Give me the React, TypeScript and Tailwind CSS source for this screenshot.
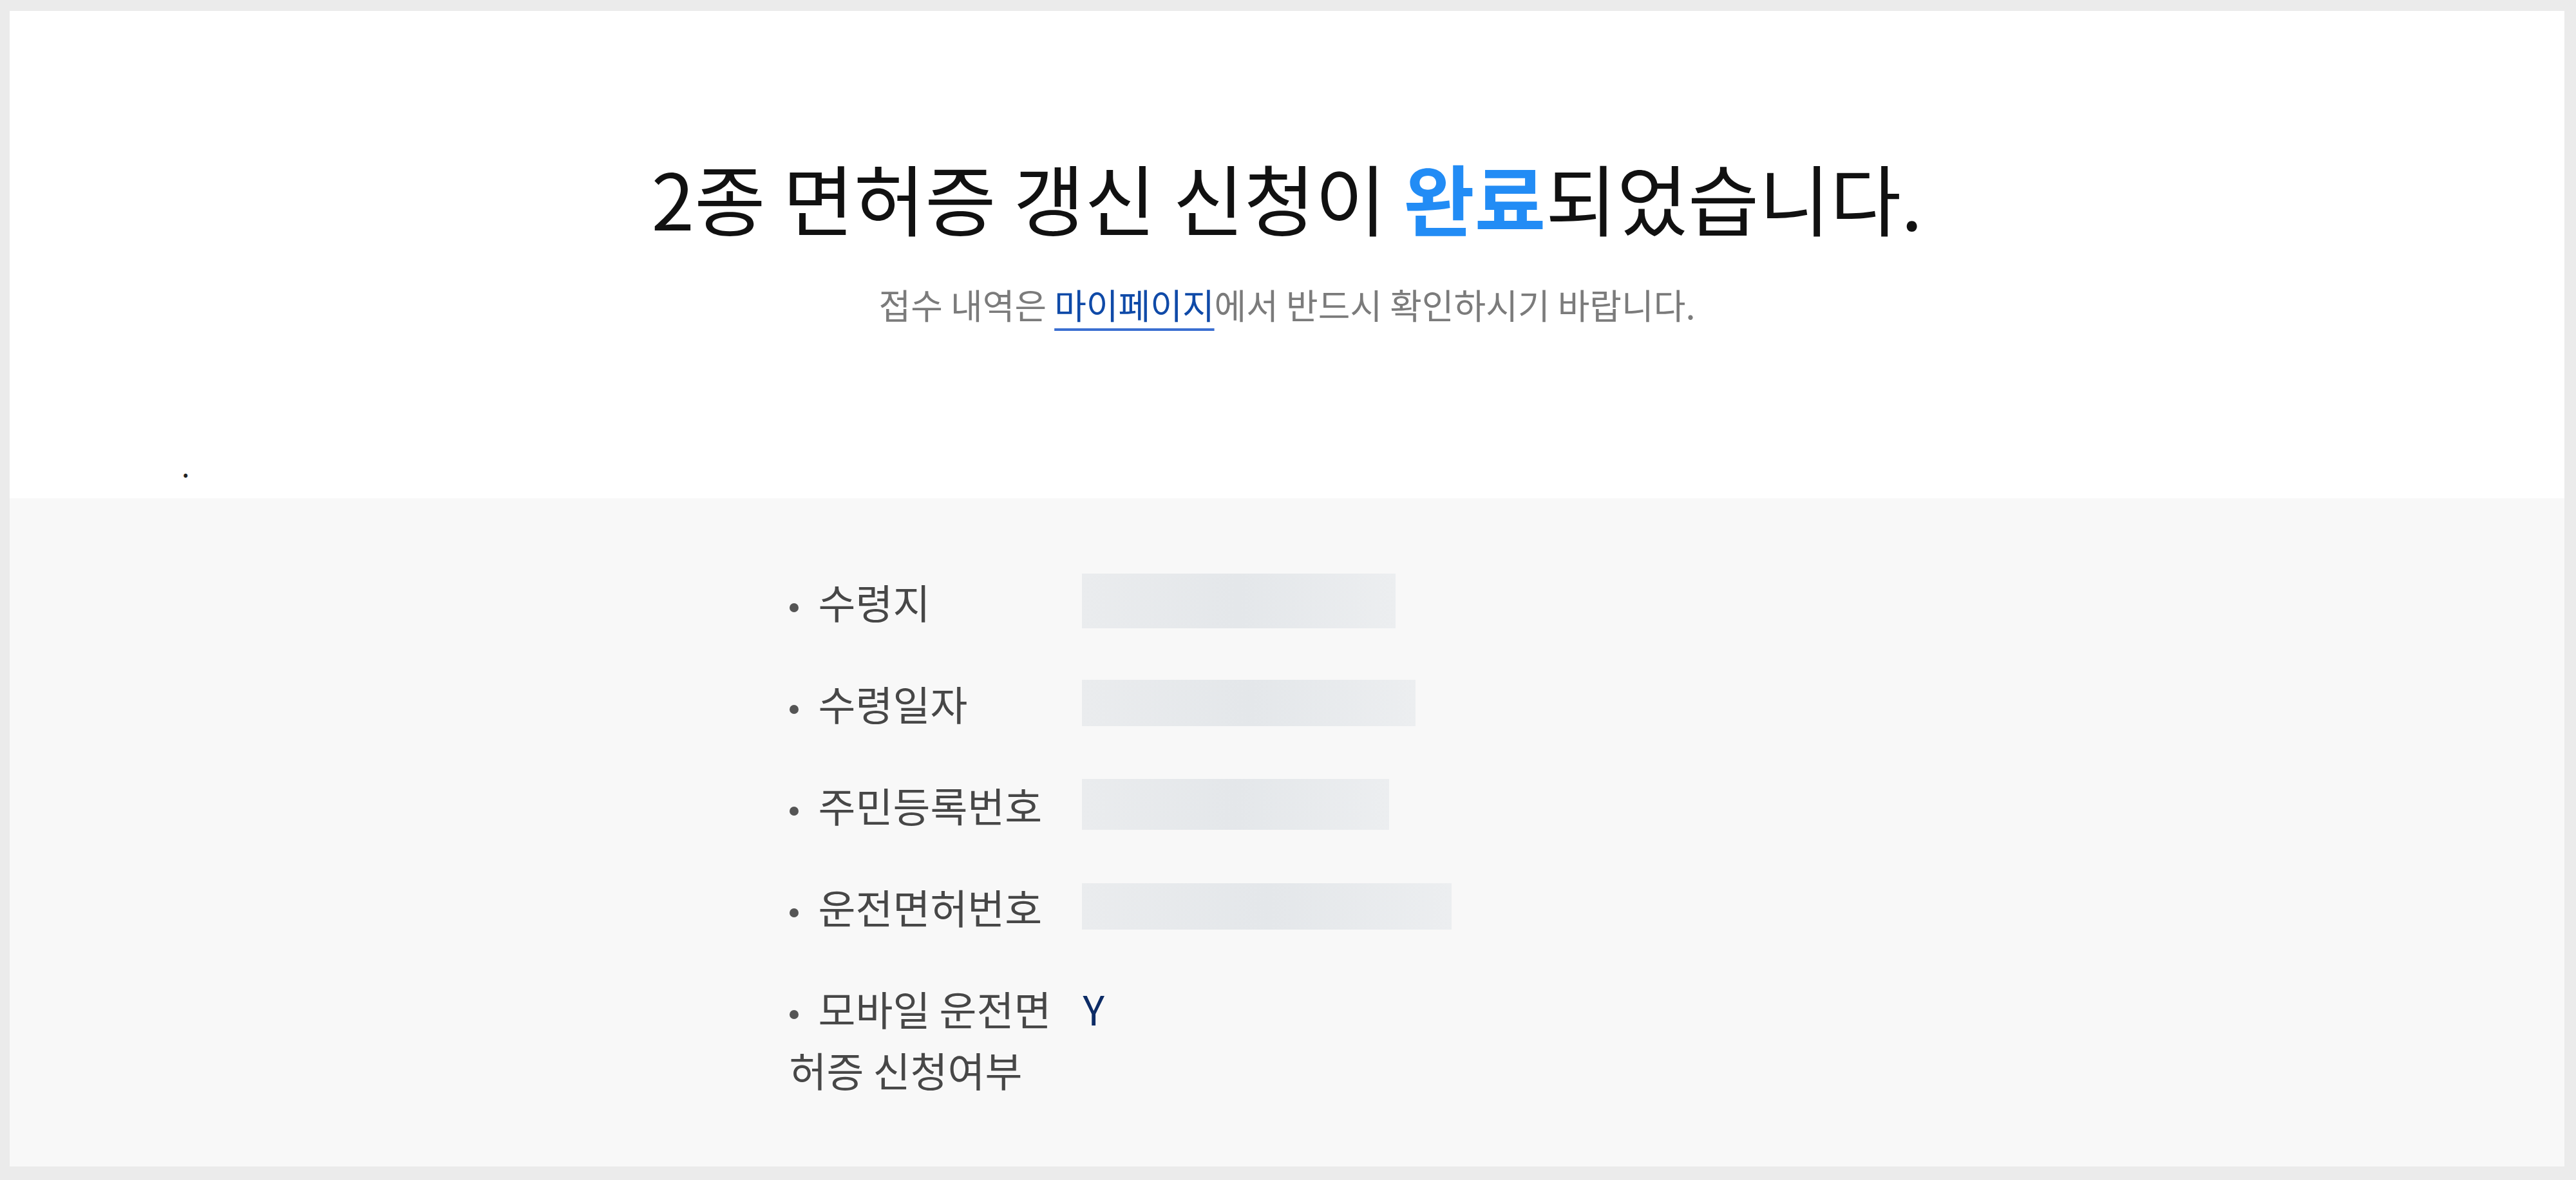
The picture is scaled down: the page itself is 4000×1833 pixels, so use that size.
const font = "font-['Noto_Sans_CJK_KR','Noto_Sans',sans-serif]"

type Row = {
  label: string
  value?: string
  box?: string
}

const rows: Row[] = [
  { label: '수령지', box: 'w-[487px] h-[85px]' },
  { label: '수령일자', box: 'w-[518px] h-[72px]' },
  { label: '주민등록번호', box: 'w-[477px] h-[79px]' },
  { label: '운전면허번호', box: 'w-[574px] h-[72px]' },
  { label: '모바일 운전면허증 신청여부', value: 'Y' },
]

function InfoRow({ row }: { row: Row }) {
  return (
    <li className={`flex ${row.box ? 'items-center' : 'items-start'}`}>
      {/* label with inline bullet so wrapped line starts under the bullet */}
      <div className="w-[454px] shrink-0 text-[63px] leading-[95px] text-[#474747]">
        <span className="mr-[31px] inline-block h-[14px] w-[14px] rounded-full bg-[#555] align-middle" />
        {row.label}
      </div>
      {row.box ? (
        // masked value (blurred out in the capture)
        <div className={`${row.box} bg-gradient-to-r from-[#eaecee] via-[#e4e7ea] to-[#eceef0]`} />
      ) : (
        <div className="pl-[2px] text-[63px] leading-[95px] text-[#0d2c66]">{row.value}</div>
      )}
    </li>
  )
}

export default function App() {
  return (
    <div className={`${font} h-[1833px] bg-[#ebebeb] pt-[17px] pr-[18px] pb-[21px] pl-[15px]`}>
      <div className="flex h-full flex-col">
        {/* Result message */}
        <section className="flex h-[757px] shrink-0 flex-col items-center bg-white pt-[229px]">
          <h1 className="text-[120px] font-normal leading-none text-[#111]">
            2종 면허증 갱신 신청이 <span className="font-bold text-[#228cf5]">완료</span>되었습니다.
          </h1>
          <p className="mt-[80px] text-[54px] leading-none text-[#7b7b7b]">
            접수 내역은{' '}
            <a className="text-[#0f4aa8] underline decoration-[#3b6fd1] decoration-[4px] underline-offset-[14px]">
              마이페이지
            </a>
            에서 반드시 확인하시기 바랍니다.
          </p>
          <div className="mt-[212px] self-start pl-[268px] text-[32px] font-bold leading-none text-[#222]">.</div>
        </section>

        {/* Application details */}
        <section className="flex-1 bg-[#f8f8f8] pt-[112px]">
          <ul className="mx-auto flex w-[1546px] flex-col gap-[63px]">
            {rows.map((row) => (
              <InfoRow key={row.label} row={row} />
            ))}
          </ul>
        </section>
      </div>
    </div>
  )
}
